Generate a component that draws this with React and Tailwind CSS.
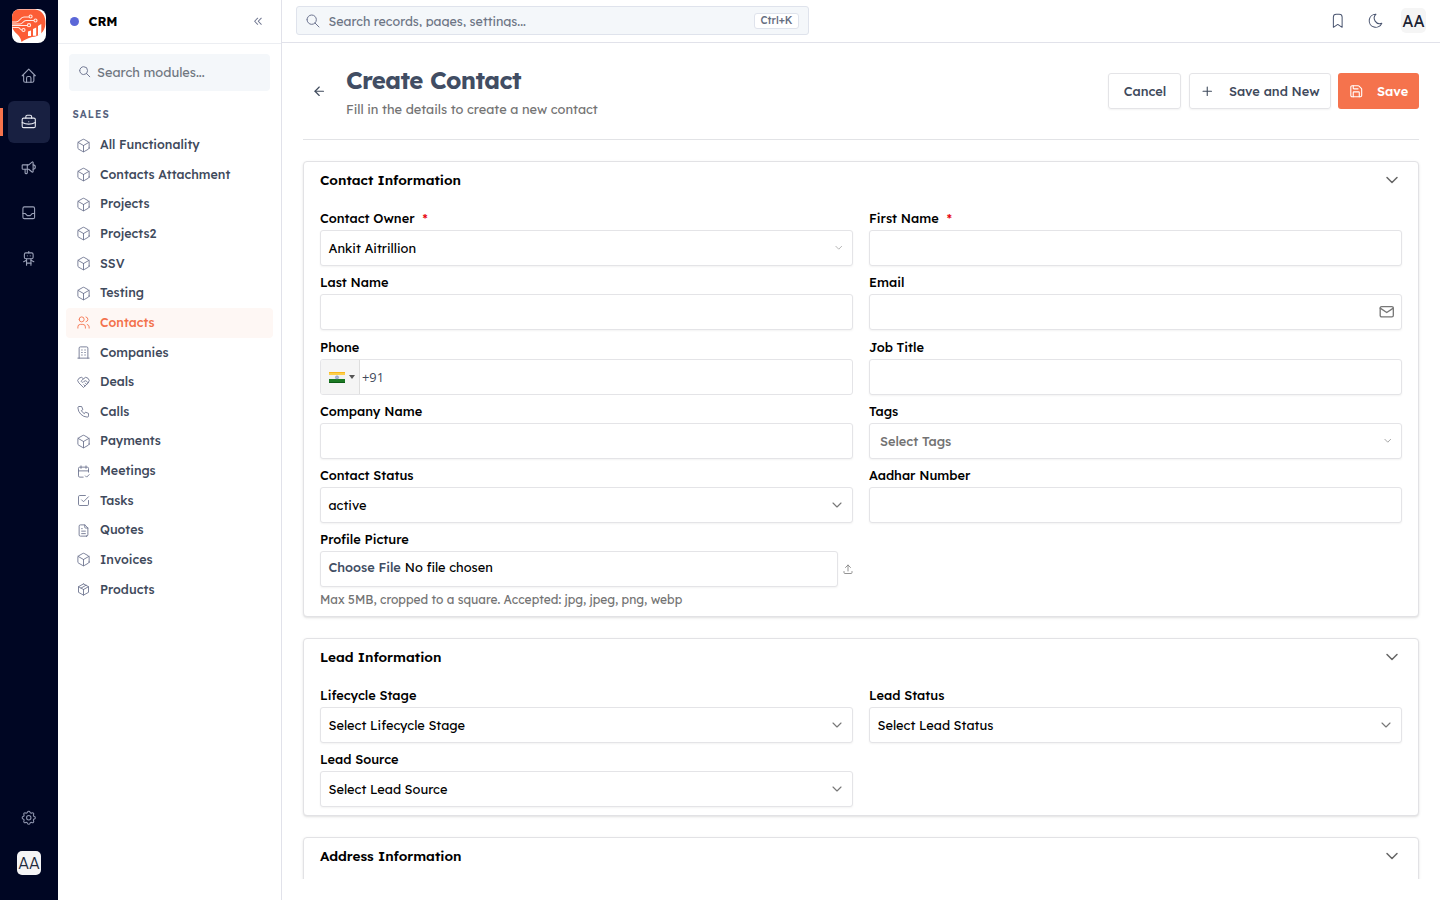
import React, { useState } from 'react';
import { ArrowLeft, ChevronDown, Plus, Save } from 'lucide-react';
import {
  TbHome,
  TbBriefcase,
  TbSpeakerphone,
  TbInbox,
  TbRobot,
  TbSettings,
  TbSearch,
  TbChevronsLeft,
  TbCube,
  TbUsers,
  TbBuilding,
  TbHeartHandshake,
  TbPhone,
  TbCalendarCheck,
  TbCheckbox,
  TbFileText,
  TbPackage,
  TbBookmark,
  TbMoon,
  TbMail,
  TbUpload,
} from 'react-icons/tb';

const railItems = [
  { name: 'Home', icon: TbHome },
  { name: 'CRM', icon: TbBriefcase },
  { name: 'Marketing', icon: TbSpeakerphone },
  { name: 'Inbox', icon: TbInbox },
  { name: 'Agents', icon: TbRobot },
];

const modules = [
  { name: 'All Functionality', icon: TbCube },
  { name: 'Contacts Attachment', icon: TbCube },
  { name: 'Projects', icon: TbCube },
  { name: 'Projects2', icon: TbCube },
  { name: 'SSV', icon: TbCube },
  { name: 'Testing', icon: TbCube },
  { name: 'Contacts', icon: TbUsers },
  { name: 'Companies', icon: TbBuilding },
  { name: 'Deals', icon: TbHeartHandshake },
  { name: 'Calls', icon: TbPhone },
  { name: 'Payments', icon: TbCube },
  { name: 'Meetings', icon: TbCalendarCheck },
  { name: 'Tasks', icon: TbCheckbox },
  { name: 'Quotes', icon: TbFileText },
  { name: 'Invoices', icon: TbCube },
  { name: 'Products', icon: TbPackage },
];

const Logo = () => (
  <svg viewBox="0 0 34 34" className="w-[34px] h-[34px] rounded-lg bg-white">
    <path
      d="M6 0.5H23C30 1 34 7 33.5 15C33 23 27 27.5 20 28C16 29 12 31 9.5 33C9 30 8 28 5 25C1 22 0 18 0 14V7C0 3 2 0.5 6 0.5Z"
      fill="#fc5d36"
    />
    <g fill="none" stroke="#ffe9e2" strokeWidth="1.1">
      <path d="M0 13H4C8 13 8 8 12 8H17" />
      <path d="M0 15H8C11 15 11 11.5 14 11.5H22" />
      <path d="M0 16.5H15" />
      <path d="M0 18.5H6C8 18.5 8 21 10 21" />
      <circle cx="18.6" cy="7.5" r="1.5" />
      <circle cx="23.5" cy="11.5" r="1.5" />
      <circle cx="17" cy="16.2" r="1.6" />
      <circle cx="11.5" cy="21" r="1.5" />
    </g>
    <path d="M16 22.5L19 21.5V27H16ZM21 20L24.2 18.5V26.7H21ZM26 17L29.3 15V25L26 26.5Z" fill="#fff" />
  </svg>
);

const IndiaFlag = () => (
  <svg viewBox="0 0 16 11" className="w-4 h-[11px]">
    <rect width="16" height="4" fill="#f9b61e" />
    <rect y="1" width="16" height="2" fill="#fdcf4b" />
    <rect y="3" width="16" height="5" fill="#f1f1f1" />
    <rect y="7" width="16" height="4" fill="#1c7a24" />
    <rect y="10" width="16" height="1" fill="#0d5c16" />
    <circle cx="8" cy="5.4" r="1.6" fill="#a9b6d6" stroke="#7688b8" strokeWidth="0.5" />
  </svg>
);

const Rail = () => (
  <aside className="flex flex-col items-center w-[58px] h-full bg-[#000623] pt-[9px] pb-[25px] shrink-0">
    <Logo />
    <nav className="flex flex-col items-center gap-1 mt-[12.4px] w-full">
      {railItems.map(({ name, icon: Icon }) => (
        <div key={name} className="flex items-center w-full h-[41.65px]">
          <span className={name === 'CRM' ? 'w-[3px] h-7 bg-[#f6734c]' : 'w-[3px]'} />
          <button
            aria-label={name}
            className={`flex items-center justify-center w-[42px] h-[42px] ml-[5px] rounded-md ${
              name === 'CRM' ? 'bg-[#182041] text-[#e8eaf2]' : 'text-[#9aa1b8]'
            }`}
          >
            <Icon size={17.5} strokeWidth={1.5} />
          </button>
        </div>
      ))}
    </nav>
    <TbSettings size={17.5} strokeWidth={1.5} className="mt-auto text-[#8d94ad]" />
    <div className="flex items-center justify-center w-6 h-6 mt-[24.5px] rounded-[5px] bg-[#f4f4f5] text-[16px] font-light text-[#202a3c]">
      AA
    </div>
  </aside>
);

const ModuleSidebar = () => (
  <aside className="flex flex-col w-56 h-full border-r border-[#e1e2ea] shrink-0">
    <div className="flex items-center h-[43.5px] pl-3 pr-4 border-b border-[#eceef2] shrink-0">
      <span className="w-[9px] h-[9px] rounded-full bg-[#5b67d8]" />
      <span className="ml-[9.5px] text-[12.8px] font-bold text-black">CRM</span>
      <TbChevronsLeft size={14.5} strokeWidth={1.7} className="ml-auto text-[#6f7690]" />
    </div>
    <div className="flex items-center h-[37px] mx-[11px] mt-[10.5px] px-[9px] rounded bg-[#f4f7fa] shrink-0">
      <TbSearch size={13.5} strokeWidth={1.7} className="-mt-px text-[#6d7490]" />
      <span className="ml-[5.5px] text-[12.8px] text-[#6f7680]">Search modules...</span>
    </div>
    <div className="mt-[17px] ml-[14.5px] text-[10px] leading-[14px] font-semibold tracking-[1.05px] text-[#56627d]">
      SALES
    </div>
    <nav className="mt-[8.2px] px-2">
      {modules.map(({ name, icon: Icon }) => (
        <div
          key={name}
          className={`flex items-center h-[29.65px] pl-[10px] rounded text-[12.48px] font-medium ${
            name === 'Contacts' ? 'bg-[#fef7f4] text-[#f3714b]' : 'text-[#3f4a5c]'
          }`}
        >
          <Icon size={15} strokeWidth={1.4} className={name === 'Contacts' ? '' : 'text-[#6c728e]'} />
          <span className="ml-[9px] mt-[0.8px]">{name}</span>
        </div>
      ))}
    </nav>
  </aside>
);

const TopBar = () => (
  <header className="flex items-center h-[43px] px-3.5 border-b border-[#e1e2ea] shrink-0">
    <div className="flex items-center w-[513px] h-[29px] -mt-0.5 pl-2 pr-[9px] rounded-[3px] border border-[#dfe3ec] bg-[#f4f7fa]">
      <TbSearch size={16} strokeWidth={1.5} className="mt-px text-[#6d7490]" />
      <span className="ml-[7.5px] h-[13px] overflow-hidden text-[12.48px] leading-4 text-[#6d7585]">
        Search records, pages, settings...
      </span>
      <kbd className="flex items-center h-4 mt-px ml-auto px-[5.5px] pt-px rounded-[3px] border border-[#dfe3ec] bg-white font-[inherit] text-[10.4px] font-medium text-[#656d80]">
        Ctrl+K
      </kbd>
    </div>
    <TbBookmark size={17.5} strokeWidth={1.4} className="ml-auto -mt-px text-[#4a5570]" />
    <TbMoon size={17.5} strokeWidth={1.4} className="ml-5 -mt-px text-[#4a5570]" />
    <div className="flex items-center justify-center w-[25px] h-[25px] ml-[17px] -mt-px rounded-[5px] bg-[#f5f5f5] text-[16px] text-[#1b2232]">
      AA
    </div>
  </header>
);

const PageHeader = () => (
  <div className="flex items-center h-[97px] border-b border-[#e2e3e6] shrink-0">
    <ArrowLeft size={14.5} strokeWidth={1.9} className="ml-[8.5px] text-[#3f4a5c]" />
    <div className="ml-5">
      <h1 className="text-[24px] leading-[30px] font-bold tracking-[-0.6px] text-[#414d63]">Create Contact</h1>
      <p className="mt-[5px] text-[12.8px] leading-[18px] text-[#737373]">Fill in the details to create a new contact</p>
    </div>
    <div className="flex ml-auto text-[12.8px] font-medium text-[#3f4a5c]">
      <button className="flex items-center justify-center w-[73px] h-9 pl-px pt-px rounded-[3px] border border-[#e4e4e7] shadow-xs">
        Cancel
      </button>
      <button className="flex items-center w-[142px] h-9 ml-2 pl-[10px] rounded-[3px] border border-[#e4e4e7] shadow-xs">
        <Plus size={14.5} strokeWidth={1.8} />
        <span className="ml-[14.5px] mt-px">Save and New</span>
      </button>
      <button className="flex items-center w-[81px] h-9 ml-[7px] pl-[11px] rounded-[3px] bg-[#f5734d] text-white font-semibold">
        <Save size={14.5} strokeWidth={1.8} />
        <span className="ml-[13.5px] mt-px">Save</span>
      </button>
    </div>
  </div>
);

const Section = ({ title, children }) => (
  <section className="min-h-24 rounded border border-[#e2e2e5] bg-white px-4 shadow-sm shrink-0">
    <div className="flex items-center justify-between h-9">
      <h2 className="text-[13.6px] font-semibold text-black">{title}</h2>
      <ChevronDown size={20} strokeWidth={1.8} className="text-[#666]" />
    </div>
    <div className="grid grid-cols-2 gap-x-4 gap-y-[8.2px] mt-[12.2px] pb-[7.8px]">{children}</div>
  </section>
);

const Field = ({ label, required, children, hint }) => (
  <div>
    <label className="flex h-4 mb-1 text-[12.8px] leading-4 font-medium text-black">
      {label}
      {required && <span className="ml-2 text-[#e7000b]">*</span>}
    </label>
    {children || <Box />}
    {hint && <p className="mt-[5px] text-[12px] leading-4 text-[#737373]">{hint}</p>}
  </div>
);

const Box = ({ children }) => (
  <div className="flex items-center w-full h-9 pl-[7.5px] pr-2 rounded-[3px] border border-[#e4e4e7] bg-white text-[12.8px] text-black shadow-xs">
    {children}
  </div>
);

const Select = ({ value }) => (
  <Box>
    <span className="mt-[1.4px]">{value}</span>
    <ChevronDown size={16} strokeWidth={1.7} className="ml-auto -mr-px text-[#777]" />
  </Box>
);

const App = () => {
  const [phone, setPhone] = useState('+91');

  return (
    <div className="flex w-full h-screen overflow-hidden bg-white font-['Lexend','Inter',sans-serif]">
      <Rail />
      <ModuleSidebar />
      <div className="flex flex-col flex-1 min-w-0">
        <TopBar />
        <main className="flex flex-col flex-1 min-h-0 mb-[21px] px-[21px] overflow-hidden">
          <PageHeader />
          <div className="flex flex-col gap-[21px] mt-[21px]">
            <Section title="Contact Information">
              <Field label="Contact Owner" required>
                <Box>
                  <span className="mt-[1.4px]">Ankit Aitrillion</span>
                  <ChevronDown size={11.5} strokeWidth={1.8} className="ml-auto text-[#aaa]" />
                </Box>
              </Field>
              <Field label="First Name" required />
              <Field label="Last Name" />
              <Field label="Email">
                <Box>
                  <TbMail size={17.5} strokeWidth={1.8} className="ml-auto -mt-px -mr-[2px] text-[#777]" />
                </Box>
              </Field>
              <Field label="Phone">
                <div className="flex w-full h-9 rounded-[3px] border border-[#e4e4e7] bg-white overflow-hidden">
                  <div className="flex items-center w-[39px] pl-2 pt-px border-r border-[#dedede] bg-[#f5f5f5] shrink-0">
                    <IndiaFlag />
                    <span className="ml-1 border-x-[3px] border-t-4 border-x-transparent border-t-[#555]" />
                  </div>
                  <input
                    value={phone}
                    onChange={(e) => setPhone(e.target.value)}
                    className="flex-1 pl-0.5 pt-[1.4px] font-['Open_Sans',sans-serif] text-[12.8px] text-[#3f4a5c] outline-none"
                  />
                </div>
              </Field>
              <Field label="Job Title" />
              <Field label="Company Name" />
              <Field label="Tags">
                <Box>
                  <span className="ml-[2.5px] mt-[1.4px] font-medium text-[#737373]">Select Tags</span>
                  <ChevronDown size={11.5} strokeWidth={1.8} className="ml-auto text-[#999]" />
                </Box>
              </Field>
              <Field label="Contact Status">
                <Select value="active" />
              </Field>
              <Field label="Aadhar Number" />
              <Field label="Profile Picture" hint="Max 5MB, cropped to a square. Accepted: jpg, jpeg, png, webp">
                <div className="flex items-center">
                  <Box>
                    <span className="-mt-[3px] font-medium text-[#414d63]">Choose File</span>
                    <span className="-mt-[3px] ml-1">No file chosen</span>
                  </Box>
                  <TbUpload size={12} strokeWidth={1.8} className="ml-1 -mr-px shrink-0 text-[#888]" />
                </div>
              </Field>
            </Section>
            <Section title="Lead Information">
              <Field label="Lifecycle Stage">
                <Select value="Select Lifecycle Stage" />
              </Field>
              <Field label="Lead Status">
                <Select value="Select Lead Status" />
              </Field>
              <Field label="Lead Source">
                <Select value="Select Lead Source" />
              </Field>
            </Section>
            <Section title="Address Information" />
          </div>
        </main>
      </div>
    </div>
  );
};

export default App;
